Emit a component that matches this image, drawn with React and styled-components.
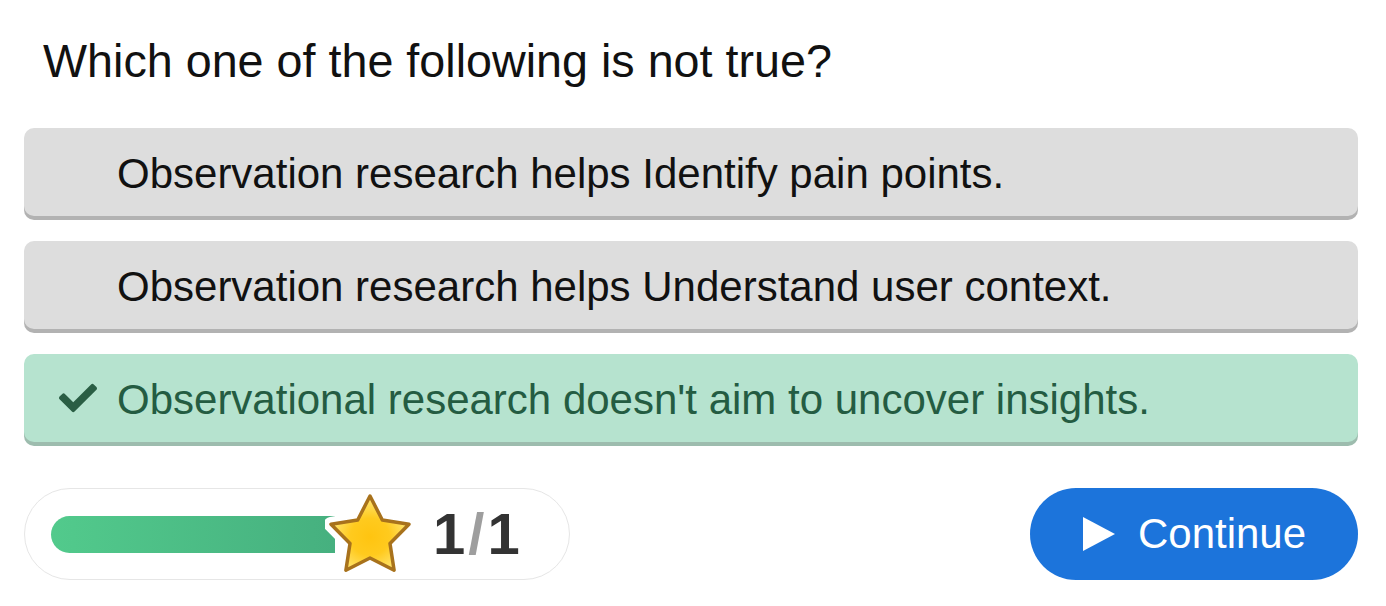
import React from 'react';
import styled, { createGlobalStyle } from 'styled-components';
import { FaCheck } from 'react-icons/fa';

const options = [
    { text: 'Observation research helps Identify pain points.', correct: false },
    { text: 'Observation research helps Understand user context.', correct: false },
    { text: "Observational research doesn't aim to uncover insights.", correct: true },
];

const STAR = 'M45 6 L57.3 30 L84 34.3 L65 53.5 L69.1 80.2 L45 68 L20.9 80.2 L25 53.5 L6 34.3 L32.7 30 Z';

function Star() {
    return (
        <StarWrap>
            <svg width="90" height="90" viewBox="0 0 90 90">
                <defs>
                    <radialGradient id="starFill" cx="50%" cy="55%" r="50%">
                        <stop offset="0%" stopColor="#ffc410" />
                        <stop offset="50%" stopColor="#ffca1e" />
                        <stop offset="100%" stopColor="#ffe46e" />
                    </radialGradient>
                </defs>
                <path d={STAR} fill="none" stroke="#ffffff" strokeWidth="15" strokeLinejoin="round" />
                <path d={STAR} fill="url(#starFill)" stroke="#a8721c" strokeWidth="3.5" strokeLinejoin="round" />
            </svg>
        </StarWrap>
    );
}

function App() {
    return (
        <>
            <GlobalStyle />
            <Page>
                <Question>Which one of the following is not true?</Question>
                <OptionList>
                    {options.map((o) => (
                        <Option key={o.text} $correct={o.correct}>
                            <CheckSlot>{o.correct && <FaCheck size={38} />}</CheckSlot>
                            {o.text}
                        </Option>
                    ))}
                </OptionList>
                <Footer>
                    <ProgressPill>
                        <BarTrack>
                            <BarFill style={{ width: '100%' }} />
                            <Star />
                        </BarTrack>
                        <Score>
                            1<Slash>/</Slash>1
                        </Score>
                    </ProgressPill>
                    <ContinueButton>
                        <svg width="34" height="36" viewBox="0 0 34 36">
                            <path d="M1 1 L33 18 L1 35 Z" fill="#ffffff" />
                        </svg>
                        Continue
                    </ContinueButton>
                </Footer>
            </Page>
        </>
    );
}

export default App;

const GlobalStyle = createGlobalStyle`
    body {
        margin: 0;
        background: #ffffff;
        font-family: "Liberation Sans", Arial, sans-serif;
    }
`;

const Page = styled.div`
    width: 1386px;
    height: 606px;
    box-sizing: border-box;
    padding: 34px 28px 0 24px;
    display: flex;
    flex-direction: column;
`;

const Question = styled.h1`
    margin: 0 0 40px 19px;
    font-size: 46.7px;
    font-weight: 400;
    line-height: 54px;
    color: #111;
`;

const OptionList = styled.div`
    display: flex;
    flex-direction: column;
    gap: 25px;
`;

const Option = styled.div`
    height: 88px;
    box-sizing: border-box;
    padding-top: 3px;
    display: flex;
    align-items: center;
    border-radius: 10px;
    font-size: 42px;
    line-height: 1;
    background: ${(p) => (p.$correct ? '#b6e3cf' : '#dddddd')};
    color: ${(p) => (p.$correct ? '#245c42' : '#111111')};
    box-shadow: 0 4px 0 ${(p) => (p.$correct ? '#9dbcae' : '#b2b2b2')};
`;

const CheckSlot = styled.div`
    width: 93px;
    flex-shrink: 0;
    display: flex;
    justify-content: flex-end;
    padding-right: 20px;
    box-sizing: border-box;
    color: #2a5e44;
    margin-top: -3px;
`;

const Footer = styled.div`
    margin-top: 46px;
    display: flex;
    align-items: center;
    justify-content: space-between;
`;

const ProgressPill = styled.div`
    width: 546px;
    height: 92px;
    box-sizing: border-box;
    border: 1.5px solid #e6e6e6;
    border-radius: 46px;
    display: flex;
    align-items: center;
    padding-left: 26px;
`;

const BarTrack = styled.div`
    position: relative;
    width: 284px;
    height: 37px;
    display: flex;
`;

const BarFill = styled.div`
    height: 100%;
    border-radius: 19px 0 0 19px;
    background: linear-gradient(90deg, #52ca8c, #46b07f);
`;

const StarWrap = styled.div`
    position: absolute;
    left: 274px;
    top: -26px;
    display: flex;
`;

const Score = styled.div`
    margin-left: 98px;
    font-size: 58px;
    font-weight: 700;
    line-height: 1;
    letter-spacing: 3px;
    color: #333333;
`;

const Slash = styled.span`
    color: #9e9e9e;
`;

const ContinueButton = styled.button`
    width: 328px;
    height: 92px;
    border: none;
    border-radius: 46px;
    background: #1c74db;
    color: #ffffff;
    font-family: "Liberation Sans", Arial, sans-serif;
    font-size: 42px;
    display: flex;
    align-items: center;
    justify-content: center;
    gap: 22px;
    padding: 0;
    cursor: pointer;
`;
